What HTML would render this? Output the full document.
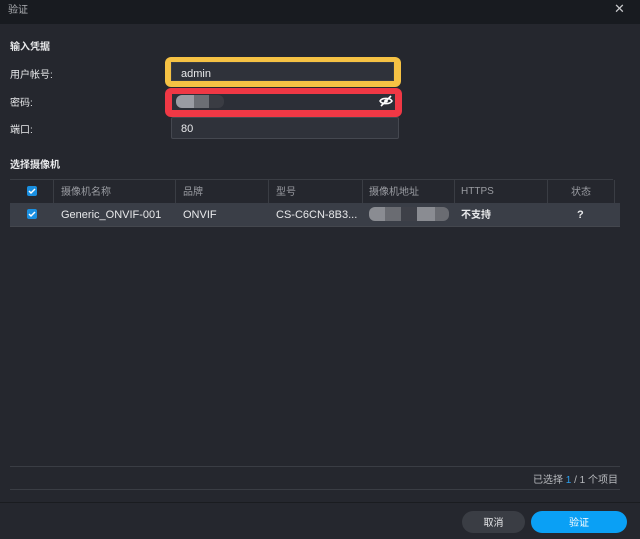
<!DOCTYPE html>
<html><head><meta charset="utf-8"><style>
*{margin:0;padding:0;box-sizing:border-box}
body{width:640px;height:539px;background:#25272e;font-family:"Liberation Sans","Noto Sans CJK SC",sans-serif;color:#e8e9eb;font-size:11px;line-height:14px;position:relative;overflow:hidden}
.a{position:absolute;white-space:nowrap}
.hdr{left:0;top:0;width:640px;height:24px;background:#181b20}
.b{font-weight:bold}
.inp{background:#2f323a;border:1px solid #454850;border-radius:2px}
.cb{width:10px;height:10px;background:#1a8fe0;border-radius:2px}
.cb svg{display:block}
.vl{width:1px;background:#3a3d44}
</style></head><body>
<div class="a hdr"></div>
<div class="a" style="left:8px;top:4px;color:#aeb0b4;font-size:10px">验证</div>
<div class="a" style="left:614px;top:0px;color:#c8c9cc;font-size:13px;line-height:18px">✕</div>

<div class="a b" style="left:10px;top:41px;font-size:10px">输入凭据</div>
<div class="a" style="left:10px;top:69px;font-size:10px">用户帐号:</div>
<div class="a" style="left:10px;top:97px;font-size:10px">密码:</div>
<div class="a" style="left:10px;top:124px;font-size:10px">端口:</div>

<div class="a" style="left:165px;top:57px;width:236px;height:30px;background:#f6c244;border-radius:6px"></div>
<div class="a" style="left:171px;top:62px;width:223px;height:19px;background:#2f323a;border:1px solid #3a3d44"></div>
<div class="a" style="left:181px;top:67px">admin</div>

<div class="a" style="left:165px;top:88px;width:237px;height:29px;background:#f03845;border-radius:6px"></div>
<div class="a" style="left:172px;top:94px;width:223px;height:16px;background:#2c2f37"></div>
<div class="a" style="left:176px;top:95px;width:48px;height:13px;background:linear-gradient(90deg,#9a9ca3 0 18px,#6c6e74 18px 33px,#3a3c43 33px);border-radius:6px"></div>
<svg class="a" style="left:379px;top:95px" width="14" height="12" viewBox="0 0 14 12"><path d="M1 6C3 2.5 11 2.5 13 6C11 9.5 3 9.5 1 6Z" fill="none" stroke="#fff" stroke-width="1.6"/><circle cx="7" cy="6" r="1.8" fill="#fff"/><path d="M2 11L12 1" stroke="#fff" stroke-width="1.6"/></svg>

<div class="a inp" style="left:171px;top:117px;width:228px;height:22px"></div>
<div class="a" style="left:181px;top:122px">80</div>

<div class="a b" style="left:10px;top:159px;font-size:10px">选择摄像机</div>

<div class="a" style="left:10px;top:179px;width:603px;height:1px;background:#3a3d44"></div>
<div class="a" style="left:10px;top:203px;width:610px;height:23px;background:#3a3e47"></div>
<div class="a" style="left:10px;top:226px;width:610px;height:1px;background:#44474e"></div>
<div class="a vl" style="left:53px;top:180px;height:23px"></div>
<div class="a vl" style="left:175px;top:180px;height:23px"></div>
<div class="a vl" style="left:268px;top:180px;height:23px"></div>
<div class="a vl" style="left:362px;top:180px;height:23px"></div>
<div class="a vl" style="left:454px;top:180px;height:23px"></div>
<div class="a vl" style="left:547px;top:180px;height:23px"></div>
<div class="a vl" style="left:614px;top:180px;height:23px"></div>

<div class="a cb" style="left:27px;top:186px"><svg width="10" height="10"><path d="M2 5l2 2 4-4" stroke="#fff" stroke-width="1.5" fill="none"/></svg></div>
<div class="a cb" style="left:27px;top:209px"><svg width="10" height="10"><path d="M2 5l2 2 4-4" stroke="#fff" stroke-width="1.5" fill="none"/></svg></div>

<div class="a" style="left:61px;top:186px;color:#9a9ca2;font-size:10px">摄像机名称</div>
<div class="a" style="left:183px;top:186px;color:#9a9ca2;font-size:10px">品牌</div>
<div class="a" style="left:276px;top:186px;color:#9a9ca2;font-size:10px">型号</div>
<div class="a" style="left:369px;top:186px;color:#9a9ca2;font-size:10px">摄像机地址</div>
<div class="a" style="left:461px;top:185px;color:#9a9ca2;font-size:10px">HTTPS</div>
<div class="a" style="left:571px;top:186px;color:#9a9ca2;font-size:10px">状态</div>

<div class="a" style="left:61px;top:208px">Generic_ONVIF-001</div>
<div class="a" style="left:183px;top:208px">ONVIF</div>
<div class="a" style="left:276px;top:208px">CS-C6CN-8B3...</div>
<div class="a" style="left:369px;top:207px;width:80px;height:14px;border-radius:6px;background:linear-gradient(90deg,#8a8c92 0 16px,#6a6c72 16px 32px,#3e4048 32px 48px,#8a8c92 48px 66px,#6a6c72 66px)"></div>
<div class="a b" style="left:461px;top:209px;font-size:10px">不支持</div>
<div class="a b" style="left:577px;top:208px">?</div>

<div class="a" style="left:10px;top:466px;width:610px;height:1px;background:#3a3d44"></div>
<div class="a" style="left:10px;top:489px;width:610px;height:1px;background:#3a3d44"></div>
<div class="a" style="left:533px;top:474px;color:#b8babe;font-size:10px">已选择 <span style="color:#2aa0f0">1</span> / 1 个项目</div>
<div class="a" style="left:0;top:502px;width:640px;height:1px;background:#1a1c20"></div>

<div class="a" style="left:462px;top:511px;width:63px;height:22px;border-radius:11px;background:#3a3d44;text-align:center;line-height:22px;font-size:10px;padding-top:2px">取消</div>
<div class="a" style="left:531px;top:511px;width:96px;height:22px;border-radius:11px;background:#0aa0f5;text-align:center;line-height:22px;color:#fff;font-size:10px;padding-top:2px">验证</div>
</body></html>
